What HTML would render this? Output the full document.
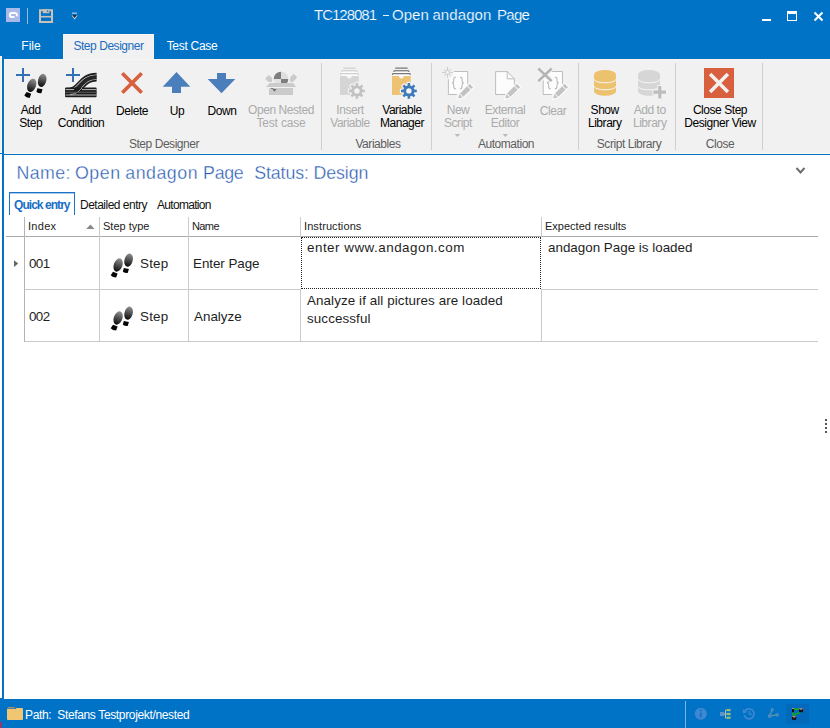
<!DOCTYPE html>
<html><head><meta charset="utf-8">
<style>
*{box-sizing:border-box;margin:0;padding:0}
html,body{width:830px;height:728px;overflow:hidden;background:#fff;font-family:"Liberation Sans",sans-serif;}
body{position:relative}
.abs{position:absolute}
svg{position:absolute;left:0;top:0;overflow:visible}
#title{left:0;top:0;width:830px;height:59px;background:#0173c7}
#titletxt{-webkit-text-stroke:0.3px #0173c7;left:222px;top:6px;width:400px;letter-spacing:-0.16px;text-align:center;color:#fff;font-size:15px;line-height:20px;white-space:nowrap}
.tab{top:34px;height:25px;color:#fff;font-size:12px;line-height:25px;white-space:nowrap;letter-spacing:-0.45px;text-align:center}
#ribbon{left:4px;top:59px;width:826px;height:95px;background:#f1f1f1;border-left:1px solid #fcf7f1;border-top:1px solid #f8f5f1;border-bottom:1px solid #fcf7f1}
.lbl{color:#000;font-size:12px;line-height:13px;text-align:center;white-space:nowrap;letter-spacing:-0.45px;top:104px;width:100px}
.lbl.dis{color:#ababab}
.grp{color:#5e5e5e;font-size:12px;white-space:nowrap;text-align:center;top:137px;line-height:14px;letter-spacing:-0.45px;width:120px}
.sep{top:63px;width:1px;height:87px;background:#cfcfcf}
#status{left:0;top:699px;width:830px;height:29px;background:#0173c7}
.gl{background:#cacaca}
.cell{font-size:13.4px;color:#1e1e1e;white-space:nowrap;line-height:18px}
.hd{font-size:11px;color:#222;white-space:nowrap;line-height:14px;top:219px}
.hw{top:162px;font-size:17.8px;line-height:22px;color:#2458b0;white-space:pre;-webkit-text-stroke:0.35px #fff}
.tw{top:5px;font-size:15px;line-height:20px;color:#fff;white-space:pre;-webkit-text-stroke:0.2px #0173c7}
.ptab{font-size:12px;color:#111;white-space:nowrap;line-height:14px;top:198px;letter-spacing:-0.5px}
</style></head><body>
<div id="title" class="abs"></div>
<div class="abs tw" style="left:314.0px;letter-spacing:-1.00px">TC128081</div><div class="abs" style="left:383px;top:15px;width:6px;height:1.4px;background:#e6f0fa"></div><div class="abs tw" style="left:392.1px;letter-spacing:0.00px">Open</div><div class="abs tw" style="left:432.4px;letter-spacing:0.10px">andagon</div><div class="abs tw" style="left:497.0px;letter-spacing:-0.70px">Page</div>
<div class="abs tab" style="left:1px;width:60px;letter-spacing:0">File</div>
<div class="abs tab" style="left:63px;width:91px;background:#f1f1f1;color:#1a6cc0;box-shadow:inset 1px 1px 0 #f9f6f2, inset -1px 0 0 #f9f6f2">Step Designer</div>
<div class="abs tab" style="left:154px;width:76px;letter-spacing:-0.3px">Test Case</div>
<div id="ribbon" class="abs"></div>
<div class="abs" style="left:0;top:56px;width:2px;height:97px;background:#f1f1f1;border-right:1px solid #fcf7f1;border-bottom:1px solid #fcf7f1"></div>
<div class="abs" style="left:2px;top:57px;width:2px;height:642px;background:#0173c7"></div>
<div class="abs" style="left:0;top:153px;width:2px;height:1px;background:#0173c7"></div><div class="abs" style="left:2px;top:154px;width:828px;height:1px;background:#0173c7"></div>

<!-- ribbon labels -->
<div class="abs lbl" style="left:-19.3px">Add<br>Step</div>
<div class="abs lbl" style="left:31px">Add<br>Condition</div>
<div class="abs lbl" style="left:82px;top:105px">Delete</div>
<div class="abs lbl" style="left:127px;top:105px">Up</div>
<div class="abs lbl" style="left:172px;top:105px">Down</div>
<div class="abs lbl dis" style="left:231px">Open Nested<br><span style="letter-spacing:-0.2px">Test case</span></div>
<div class="abs lbl dis" style="left:300px">Insert<br>Variable</div>
<div class="abs lbl" style="left:352px">Variable<br>Manager</div>
<div class="abs lbl dis" style="left:408px">New<br>Script</div>
<div class="abs lbl dis" style="left:455px">External<br>Editor</div>
<div class="abs lbl dis" style="left:503px;top:105px">Clear</div>
<div class="abs lbl" style="left:554.7px">Show<br>Library</div>
<div class="abs lbl dis" style="left:599.7px">Add to<br>Library</div>
<div class="abs lbl" style="left:670px">Close Step<br>Designer View</div>

<div class="abs grp" style="left:104px">Step Designer</div>
<div class="abs grp" style="left:318px">Variables</div>
<div class="abs grp" style="left:446px">Automation</div>
<div class="abs grp" style="left:569px">Script Library</div>
<div class="abs grp" style="left:660px">Close</div>

<div class="abs sep" style="left:321px"></div>
<div class="abs sep" style="left:431px"></div>
<div class="abs sep" style="left:578px"></div>
<div class="abs sep" style="left:675px"></div>
<div class="abs sep" style="left:762px"></div>


<!-- content -->
<div class="abs hw" style="left:16.6px;letter-spacing:0.40px">Name:</div><div class="abs hw" style="left:74.9px;letter-spacing:0.60px">Open</div><div class="abs hw" style="left:125.3px;letter-spacing:0.50px">andagon</div><div class="abs hw" style="left:203.1px;letter-spacing:-0.30px">Page</div><div class="abs hw" style="left:254.2px;letter-spacing:-0.10px">Status:</div><div class="abs hw" style="left:313.5px;letter-spacing:-0.10px">Design</div>
<div class="abs" style="left:9px;top:192px;width:66px;height:23px;border:1px solid #1a73c9;border-bottom:none"></div>
<div class="abs" style="left:10px;top:193px;width:64px;height:1px;background:#a9cbeb"></div>
<div class="abs ptab" id="pt1" style="left:14px;font-weight:bold;color:#1a6fc4;letter-spacing:-0.95px">Quick entry</div>
<div class="abs ptab" id="pt2" style="left:80px">Detailed entry</div>
<div class="abs ptab" id="pt3" style="left:157px;letter-spacing:-0.7px">Automation</div>
<!-- grid lines -->
<div class="abs gl" style="left:6px;top:236px;width:812px;height:1px;background:#a9a9a9"></div>
<div class="abs gl" style="left:24px;top:289px;width:277px;height:1px"></div><div class="abs gl" style="left:541px;top:289px;width:277px;height:1px"></div>
<div class="abs gl" style="left:24px;top:341px;width:794px;height:1px"></div>
<div class="abs gl" style="left:24px;top:217px;width:1px;height:125px;background:#b4b4b4"></div>
<div class="abs gl" style="left:99px;top:217px;width:1px;height:125px"></div>
<div class="abs gl" style="left:188px;top:217px;width:1px;height:125px"></div>
<div class="abs gl" style="left:300px;top:217px;width:1px;height:125px"></div>
<div class="abs gl" style="left:541px;top:217px;width:1px;height:125px"></div>
<!-- headers -->
<div class="abs hd" id="h1" style="left:28px;letter-spacing:0.3px">Index</div>
<div class="abs hd" id="h2" style="left:103px">Step type</div>
<div class="abs hd" id="h3" style="left:192px;letter-spacing:-0.6px">Name</div>
<div class="abs hd" id="h4" style="left:304px;letter-spacing:0.1px">Instructions</div>
<div class="abs hd" id="h5" style="left:545px">Expected results</div>
<!-- focus rect -->
<div class="abs" style="left:300px;top:237px;width:242px;height:52px;background:#fff"></div><div class="abs" style="left:301px;top:237px;width:240px;height:52px;border:1px dotted #222"></div>
<!-- cells -->
<div class="abs cell" id="c1" style="left:29px;top:255px;letter-spacing:-0.6px">001</div>
<div class="abs cell" id="c2" style="left:29px;top:308px;letter-spacing:-0.6px">002</div>
<div class="abs cell" id="c3" style="left:140px;top:255px;letter-spacing:0.2px">Step</div>
<div class="abs cell" id="c4" style="left:140px;top:308px;letter-spacing:0.2px">Step</div>
<div class="abs cell" id="c5" style="left:193px;top:255px;letter-spacing:-0.05px">Enter Page</div>
<div class="abs cell" id="c6" style="left:194px;top:308px">Analyze</div>
<div class="abs cell" id="c7" style="left:307px;top:239px;letter-spacing:0.5px">enter www.andagon.com</div>
<div class="abs cell" id="c8" style="left:307px;top:292px;letter-spacing:0.09px">Analyze if all pictures are loaded</div>
<div class="abs cell" id="c9" style="left:307px;top:310px;letter-spacing:0.1px">successful</div>
<div class="abs cell" id="c10" style="left:548px;top:239px">andagon Page is loaded</div>

<!-- ICONS -->
<svg width="830" height="728" viewBox="0 0 830 728" id="icons">
<defs>
<linearGradient id="foot" x1="0" y1="0" x2="0" y2="1"><stop offset="0" stop-color="#8a8a8a"/><stop offset=".55" stop-color="#333"/><stop offset="1" stop-color="#000"/></linearGradient>
<linearGradient id="foot1" gradientUnits="userSpaceOnUse" x1="0" y1="79" x2="0" y2="93"><stop offset="0" stop-color="#8e8e8e"/><stop offset=".6" stop-color="#3a3a3a"/><stop offset="1" stop-color="#000"/></linearGradient>
<linearGradient id="foot2" gradientUnits="userSpaceOnUse" x1="0" y1="74" x2="0" y2="88"><stop offset="0" stop-color="#8e8e8e"/><stop offset=".6" stop-color="#3a3a3a"/><stop offset="1" stop-color="#000"/></linearGradient>
<g id="feet">
<ellipse cx="31.700" cy="85.300" rx="4.300" ry="6.900" transform="rotate(20 31.700 85.300)" fill="url(#foot1)"/>
<path d="M26.600 92.100l4.600 1.700l-1.500 4.100q-3.500 -0.200 -5.400-2.300z" fill="#050505"/>
<ellipse cx="42.200" cy="80.400" rx="4.100" ry="6.700" transform="rotate(15 42.200 80.400)" fill="url(#foot2)"/>
<path d="M37.400 88.200l5.100 1.100l-1.200 4q-3.200 0.200 -4.900-1.500z" fill="#050505"/>
</g>
</defs>

<!-- Add Step -->
<g fill="#3271b5"><rect x="16" y="74" width="14" height="2"/><rect x="22" y="68" width="2" height="14"/>
<rect x="66" y="74" width="14" height="2"/><rect x="72" y="68" width="2" height="14"/></g>
<g>
<ellipse cx="31.7" cy="85.3" rx="4.3" ry="6.9" transform="rotate(20 31.7 85.3)" fill="url(#foot1)"/>
<path d="M26.6 92.1l4.6 1.7l-1.5 4.1q-3.5 -0.2 -5.4-2.3z" fill="#050505"/>
<ellipse cx="42.2" cy="80.4" rx="4.1" ry="6.7" transform="rotate(15 42.2 80.4)" fill="url(#foot2)"/>
<path d="M37.4 88.2l5.1 1.1l-1.2 4q-3.2 0.2 -4.9-1.5z" fill="#050505"/>
</g>
<!-- Add Condition -->
<g fill="none">
<path d="M66 92.4C82 92.4 80 77.1 96.6 77.1" stroke="#1c1c1c" stroke-width="8.6"/>
<path d="M66 92.4C82 92.4 80 77.1 96.6 77.1" stroke="#e6e6e6" stroke-width="5.4"/>
<path d="M66 92.4C82 92.4 80 77.1 96.6 77.1" stroke="#262626" stroke-width="4.2"/>
<rect x="65" y="87.6" width="31.6" height="9.6" rx="1" fill="#1c1c1c"/>
<path d="M65.5 89.6H74M82 89.6h14.5M65.5 95h31" stroke="#e0e0e0" stroke-width=".8"/>
<path d="M70 94.5C77 94 79 91 82 88" stroke="#e0e0e0" stroke-width=".7"/>
<path d="M65 92.3h31.5" stroke="#555" stroke-width="1.2"/>
</g>
<!-- Delete -->
<path d="M122.3 73.3l19.4 19.4M141.7 73.3l-19.4 19.4" stroke="#d8603f" stroke-width="3.7" fill="none"/>
<!-- Up / Down -->
<path d="M176.5 72l13.8 14.8h-9.3v6.2h-9v-6.2h-9.3z" fill="#4a7fbb"/>
<path d="M217 73h9v6h9.3l-13.8 14.3l-13.8-14.3h9.3z" fill="#4a7fbb"/>
<!-- nested -->
<g><path d="M281 79V71.7A7.3 7.3 0 0 0 273.7 79z" fill="#7e7e7e"/><path d="M281 79V71.7A7.3 7.3 0 0 1 288.3 79z" fill="#dedede"/><path d="M273.7 79A7.3 7.3 0 0 0 274.9 83H281V79z" fill="#e2e2e2"/><path d="M288.3 79A7.3 7.3 0 0 1 287.1 83H281V79z" fill="#7e7e7e"/><path d="M265 78.6l3.9-3.7l3.2 3v4h-3.7z" fill="#cbcbcb"/><path d="M297.2 77.3l-3.6-3.5l-3.5 3.6v4.6h3z" fill="#cbcbcb"/><path d="M269.6 83h23.4l3.2 4h-30.2z" fill="#cbcbcb"/><rect x="269" y="88" width="24" height="7" fill="#cbcbcb"/><path d="M272.8 89h3.8l-2.4 2.8z" fill="#6a6a6a"/><path d="M271 88.4q2.5 -0.6 3 2" stroke="#555" stroke-width=".7" fill="none"/></g>
<!-- variables -->
<g><path d="M340.0 76h18.7v18.9h-18.7z" fill="#d5d5d5"/><path d="M346.7 75.6a2.6 2.8 0 0 0 5.2 0z" fill="#f6f6f6"/><path d="M343.2 68.1h12.4" stroke="#c8c8c8" stroke-width="1" fill="none"/><path d="M341.9 73.2v-2.400h15v2.400z" fill="#fbfbfb"/><path d="M341.9 71.900v-1.100h15v1.100" stroke="#c8c8c8" stroke-width="1" fill="none"/><path d="M340.6 75.900v-2.200h17.600v2.200z" fill="#fbfbfb"/><path d="M340.6 74.900v-1.200h17.600v1.200" stroke="#c8c8c8" stroke-width="1" fill="none"/><path d="M355.59 85.45L355.65 83.00L358.15 83.00L358.21 85.45L359.83 86.13L361.60 84.43L363.37 86.20L361.67 87.97L362.35 89.59L364.80 89.65L364.80 92.15L362.35 92.21L361.67 93.83L363.37 95.60L361.60 97.37L359.83 95.67L358.21 96.35L358.15 98.80L355.65 98.80L355.59 96.35L353.97 95.67L352.20 97.37L350.43 95.60L352.13 93.83L351.45 92.21L349.00 92.15L349.00 89.65L351.45 89.59L352.13 87.97L350.43 86.20L352.20 84.43L353.97 86.13Z" fill="#f1f1f1" stroke="#f1f1f1" stroke-width="2.4" stroke-linejoin="round"/><path d="M355.59 85.45L355.65 83.00L358.15 83.00L358.21 85.45L359.83 86.13L361.60 84.43L363.37 86.20L361.67 87.97L362.35 89.59L364.80 89.65L364.80 92.15L362.35 92.21L361.67 93.83L363.37 95.60L361.60 97.37L359.83 95.67L358.21 96.35L358.15 98.80L355.65 98.80L355.59 96.35L353.97 95.67L352.20 97.37L350.43 95.60L352.13 93.83L351.45 92.21L349.00 92.15L349.00 89.65L351.45 89.59L352.13 87.97L350.43 86.20L352.20 84.43L353.97 86.13Z" fill="#c2c2c2"/><circle cx="356.90" cy="90.90" r="2.70" fill="#f4f4f4"/></g><g><path d="M392.0 76h18.7v18.9h-18.7z" fill="#edc272"/><path d="M398.7 75.6a2.6 2.8 0 0 0 5.2 0z" fill="#f6f6f6"/><path d="M395.2 68.1h12.4" stroke="#5a5a5a" stroke-width="1" fill="none"/><path d="M393.9 73.2v-2.400h15v2.400z" fill="#fbfbfb"/><path d="M393.9 71.900v-1.100h15v1.100" stroke="#5a5a5a" stroke-width="1" fill="none"/><path d="M392.6 75.900v-2.200h17.600v2.200z" fill="#fbfbfb"/><path d="M392.6 74.900v-1.200h17.600v1.200" stroke="#5a5a5a" stroke-width="1" fill="none"/><path d="M407.59 85.45L407.65 83.00L410.15 83.00L410.21 85.45L411.83 86.13L413.60 84.43L415.37 86.20L413.67 87.97L414.35 89.59L416.80 89.65L416.80 92.15L414.35 92.21L413.67 93.83L415.37 95.60L413.60 97.37L411.83 95.67L410.21 96.35L410.15 98.80L407.65 98.80L407.59 96.35L405.97 95.67L404.20 97.37L402.43 95.60L404.13 93.83L403.45 92.21L401.00 92.15L401.00 89.65L403.45 89.59L404.13 87.97L402.43 86.20L404.20 84.43L405.97 86.13Z" fill="#f1f1f1" stroke="#f1f1f1" stroke-width="2.4" stroke-linejoin="round"/><path d="M407.59 85.45L407.65 83.00L410.15 83.00L410.21 85.45L411.83 86.13L413.60 84.43L415.37 86.20L413.67 87.97L414.35 89.59L416.80 89.65L416.80 92.15L414.35 92.21L413.67 93.83L415.37 95.60L413.60 97.37L411.83 95.67L410.21 96.35L410.15 98.80L407.65 98.80L407.59 96.35L405.97 95.67L404.20 97.37L402.43 95.60L404.13 93.83L403.45 92.21L401.00 92.15L401.00 89.65L403.45 89.59L404.13 87.97L402.43 86.20L404.20 84.43L405.97 86.13Z" fill="#3e79b9"/><circle cx="408.90" cy="90.90" r="2.70" fill="#f4f4f4"/></g>
<!-- automation -->
<g><path d="M448.4 71.5h19.3v23h-19.3z" fill="#fcfcfc"/><path d="M454 71.5h13.7v12.5M456.8 94.5h-8.4v-15.2" fill="none" stroke="#bdbdbd" stroke-width="1"/><circle cx="447.5" cy="72.4" r="6.3" fill="#f1f1f1"/><path d="M447.5 72.4L452.90 72.40M447.5 72.4L450.75 75.65M447.5 72.4L447.50 77.80M447.5 72.4L444.25 75.65M447.5 72.4L442.10 72.40M447.5 72.4L444.25 69.15M447.5 72.4L447.50 67.00M447.5 72.4L450.75 69.15" stroke="#c6c6c6" stroke-width=".9" fill="none"/><circle cx="447.5" cy="72.4" r="1.9" fill="#f6f6f6" stroke="#c6c6c6" stroke-width=".8"/><g fill="none" stroke="#bcbcbc" stroke-width="1.1"><path d="M455.9 77.1q-2.2 0 -2.2 2v2q0 1.6 -1.6 1.8q1.6 .2 1.6 1.8v2q0 2 2.2 2"/><path d="M459.9 77.1q2.2 0 2.2 2v2q0 1.6 1.6 1.8q-1.6 .2 -1.6 1.8v2q0 2 -2.2 2"/></g><g transform="translate(458.2 98.6) rotate(-45)"><path d="M-0.6 0L4.5 -2.40H18.6V2.40H4.5Z" fill="#fbfbfb" stroke="#fbfbfb" stroke-width="2.2" stroke-linejoin="round"/><path d="M0 0L4 -2.40V2.40Z" fill="#c3c3c3"/><rect x="4.9" y="-2.40" width="10.10" height="4.80" fill="#c3c3c3"/><rect x="15.80" y="-2.40" width="2.8" height="4.80" fill="#c3c3c3"/></g><path d="M495.6 71.6h11.6l7.2 7.2v15.7h-18.8z" fill="#fcfcfc" stroke="#bdbdbd" stroke-width="1"/><path d="M507.2 71.6v7.2h7.2" fill="none" stroke="#bdbdbd" stroke-width="1"/><g transform="translate(505.3 98.6) rotate(-45)"><path d="M-0.6 0L4.5 -2.40H18.6V2.40H4.5Z" fill="#fbfbfb" stroke="#fbfbfb" stroke-width="2.2" stroke-linejoin="round"/><path d="M0 0L4 -2.40V2.40Z" fill="#c3c3c3"/><rect x="4.9" y="-2.40" width="10.10" height="4.80" fill="#c3c3c3"/><rect x="15.80" y="-2.40" width="2.8" height="4.80" fill="#c3c3c3"/></g><path d="M543.2 71.5h19.3v23h-19.3z" fill="#fcfcfc"/><path d="M551 71.5h11.5v12.5M551.8 94.5h-8.6v-14" fill="none" stroke="#bdbdbd" stroke-width="1"/><g fill="none" stroke="#bcbcbc" stroke-width="1.1"><path d="M550.8 77.1q-2.2 0 -2.2 2v2q0 1.6 -1.6 1.8q1.6 .2 1.6 1.8v2q0 2 2.2 2"/><path d="M554.8 77.1q2.2 0 2.2 2v2q0 1.6 1.6 1.8q-1.6 .2 -1.6 1.8v2q0 2 -2.2 2"/></g><path d="M538.3 68.5l13.4 12.6M551.7 68.5l-13.4 12.6" stroke="#f4f4f4" stroke-width="4.6" fill="none"/><path d="M538.3 68.5l13.4 12.6M551.7 68.5l-13.4 12.6" stroke="#b4b4b4" stroke-width="2.5" fill="none"/><g transform="translate(553.2 98.6) rotate(-45)"><path d="M-0.6 0L4.5 -2.40H18.6V2.40H4.5Z" fill="#fbfbfb" stroke="#fbfbfb" stroke-width="2.2" stroke-linejoin="round"/><path d="M0 0L4 -2.40V2.40Z" fill="#c3c3c3"/><rect x="4.9" y="-2.40" width="10.10" height="4.80" fill="#c3c3c3"/><rect x="15.80" y="-2.40" width="2.8" height="4.80" fill="#c3c3c3"/></g></g>
<path d="M454.6 134h5.6l-2.8 3z" fill="#b9b9b9"/><path d="M502.6 134h5.6l-2.8 3z" fill="#b9b9b9"/>
<!-- library -->
<g><path d="M594.0 74.4v17.2a11 4.2 0 0 0 22 0v-17.2z" fill="#edc26f"/><ellipse cx="605.0" cy="74.4" rx="11" ry="4.5" fill="#edc26f"/><path d="M594.0 79.2a11 3.6 0 0 0 22 0" fill="none" stroke="#f6f6f6" stroke-width="1"/><path d="M594.0 86.2a11 3.6 0 0 0 22 0" fill="none" stroke="#f6f6f6" stroke-width="1"/></g><g><path d="M638.0 74.4v17.2a11 4.2 0 0 0 22 0v-17.2z" fill="#d6d6d6"/><ellipse cx="649.0" cy="74.4" rx="11" ry="4.5" fill="#d6d6d6"/><path d="M638.0 79.2a11 3.6 0 0 0 22 0" fill="none" stroke="#f6f6f6" stroke-width="1"/><path d="M638.0 86.2a11 3.6 0 0 0 22 0" fill="none" stroke="#f6f6f6" stroke-width="1"/></g><path d="M658.2 86h3.2v4.6h4.6v3.2h-4.6v4.8h-3.2v-4.8h-4.8v-3.2h4.8z" fill="#f3f3f3" stroke="#f3f3f3" stroke-width="2"/><path d="M658.2 86h3.2v4.6h4.6v3.2h-4.6v4.8h-3.2v-4.8h-4.8v-3.2h4.8z" fill="#bdbdbd"/>
<!-- close -->
<rect x="704" y="68" width="30" height="30" fill="#d8603f"/><path d="M710.100 74.100l17.800 17.800M727.900 74.100l-17.800 17.800" stroke="#f2f1f0" stroke-width="3.500" fill="none"/>

<!-- content icons -->
<path d="M796.5 167.5l4 4.5l4-4.500" stroke="#6e6e6e" stroke-width="2" fill="none" transform="translate(0 .5)"/>
<g fill="#555"><rect x="825" y="419" width="2" height="2"/><rect x="825" y="423" width="2" height="2"/><rect x="825" y="427" width="2" height="2"/><rect x="825" y="431" width="2" height="2"/></g>
<path d="M86.200 229h8.400l-4.200-4.400z" fill="#8a8a8a"/>
<path d="M14 260.200v6.800l4.200-3.400z" fill="#666"/>
<use href="#feet" transform="translate(86.4 179.7)"/><use href="#feet" transform="translate(86.4 232.7)"/>

<!-- title bar -->
<rect x="6" y="8" width="14" height="14" fill="#a9b9ea"/>
<path d="M14.400 17h-2.600a2 2 0 0 1 0 -4h3.200a2 2 0 0 1 1.600 3.200" fill="none" stroke="#fff" stroke-width="1.900"/>
<rect x="27" y="8" width="1" height="16" fill="#9fb6cf"/>
<path d="M40 10.200h12v11.800h-12z" fill="none" stroke="#c9c0b8" stroke-width="2"/>
<rect x="42.800" y="9.200" width="6.500" height="4" fill="#c9c0b8"/><rect x="46.900" y="10.300" width="1.400" height="1.700" fill="#2a7cc8"/>
<rect x="40" y="15.900" width="12" height="1.600" fill="#c9c0b8"/>
<rect x="72" y="12.500" width="5" height="1.400" fill="#8cc0f0"/>
<path d="M71.600 15.200h6l-3 4.200z" fill="#f0f0f0"/>
<path d="M72.200 15.100h4.800l-2.400 3.200z" fill="#2b2b2b"/>
<!-- window controls -->
<rect x="762" y="19" width="9" height="2" fill="#fff"/>
<rect x="787.5" y="11.5" width="9" height="9" fill="none" stroke="#fff" stroke-width="1"/><rect x="787" y="11" width="10" height="3" fill="#fff"/>
<path d="M814.5 12.5l8 8M822.5 12.5l-8 8" stroke="#fff" stroke-width="2" fill="none"/>
</svg>

<div id="status" class="abs"></div>
<div class="abs" style="left:0;top:698px;width:2px;height:1px;background:#0173c7"></div>
<div class="abs" id="st" style="left:25px;top:708px;color:#fff;font-size:12px;line-height:14px;white-space:pre;letter-spacing:-0.35px">Path:  Stefans Testprojekt/nested</div>
<div class="abs" style="left:685px;top:701px;width:1px;height:27px;background:#7db4e4"></div>
<div class="abs" style="left:786px;top:704px;width:23px;height:20px;background:#0369ba"></div>
<div class="abs" style="left:0;top:722px;width:2px;height:6px;background:#8a3d6e"></div>
<svg width="830" height="728" viewBox="0 0 830 728">
<path d="M7 709h8.500l.8-1h5.700q1 0 1 1v10q0 1 -1 1h-14q-1 0 -1 -1z" fill="#f0c673"/>
<path d="M7.200 708.500l.6-1.400h7.400l-.7 1.400z" fill="#a98c6c"/>
<circle cx="700.800" cy="713.700" r="6" fill="#3f88d1"/>
<rect x="699.900" y="712.600" width="1.900" height="4.600" fill="#0f73c5"/><circle cx="700.800" cy="710.500" r="1.100" fill="#0f73c5"/>
<rect x="720" y="712" width="4" height="4" fill="#5d94cc"/>
<path d="M724 714h3M725.500 710v8M725.500 710h2M725.500 718h2" stroke="#b9c3b0" stroke-width="1" fill="none"/>
<rect x="727" y="709" width="3.600" height="2.200" fill="#9cbd6c"/><rect x="727" y="712.900" width="3.600" height="2.200" fill="#9cbd6c"/><rect x="727" y="716.600" width="3.600" height="2.200" fill="#9cbd6c"/>
<path d="M744.600 711.500a5 5 0 1 1 -.3 3.800" stroke="#3f88d1" stroke-width="1.700" fill="none"/>
<path d="M742.600 709.200l.5 4.200l4-1.300z" fill="#3f88d1"/>
<path d="M749.400 710.800v3.400h2.800" stroke="#3f88d1" stroke-width="1.300" fill="none"/>
<path d="M769.800 716l2.400-6.300M769.800 716l7.400-1.200" stroke="#6fa57c" stroke-width="1" fill="none"/>
<circle cx="769.800" cy="716" r="2.100" fill="#4c88c6"/><circle cx="772.200" cy="709.700" r="1.700" fill="#4c88c6"/><circle cx="777.200" cy="714.800" r="1.900" fill="#4c88c6"/>
<path d="M793 712v4M794 709.300h5.200M794 716l1.800-2.200l4.500-1.200" stroke="#14b414" stroke-width="1.400" fill="none"/>
<rect x="792" y="708" width="2" height="4.200" fill="#1a0f14"/><rect x="792" y="708" width="2" height="1" fill="#b98f9f"/>
<rect x="799" y="708" width="4" height="4.200" fill="#1a0f14"/><path d="M799 708h4v.8l-2 1.400l-2-1.400z" fill="#9a7f8c"/>
<rect x="792" y="715.800" width="4.200" height="4" fill="#1a0f14"/><path d="M792 715.800h4.200v.8l-2.100 1.400l-2.100-1.400z" fill="#9a7f8c"/>
</svg>

</body></html>
